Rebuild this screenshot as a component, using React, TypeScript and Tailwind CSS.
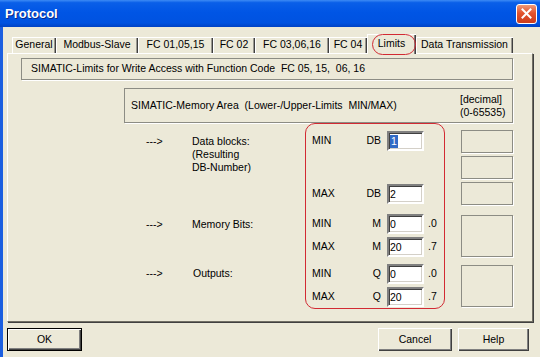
import React from "react";

const tabs = [
  { label: "General", w: "w-[44px]" },
  { label: "Modbus-Slave", w: "w-[82px]" },
  { label: "FC 01,05,15", w: "w-[75px]" },
  { label: "FC 02", w: "w-[42px]" },
  { label: "FC 03,06,16", w: "w-[74px]" },
  { label: "FC 04", w: "w-[38px]" },
  { label: "Limits", w: "w-[49px]", active: true },
  { label: "Data Transmission", w: "w-[97px]" },
];

function Field({ value, selected }: { value: string; selected?: boolean }) {
  return (
    <div className="flex h-[20px] w-[37px] items-center border-2 border-t-[#808080] border-l-[#808080] border-b-white border-r-white bg-white pl-[1px] shadow-[inset_1px_1px_0_#404040,inset_-1px_-1px_0_#d4d0c8]">
      {selected ? (
        <span className="bg-[#316ac5] px-[1px] leading-[13px] text-white">{value}</span>
      ) : (
        <span className="leading-[13px]">{value}</span>
      )}
    </div>
  );
}

function LimitRow({ kind, prefix, value, suffix, selected }: { kind: string; prefix: string; value: string; suffix?: string; selected?: boolean }) {
  return (
    <div className="flex h-[20px] items-center">
      <span className="w-[50px]">{kind}</span>
      <span className="w-[19px] text-right">{prefix}</span>
      <span className="w-[6px]" />
      <Field value={value} selected={selected} />
      <span className="w-[4px]" />
      <span className="w-[33px]">{suffix}</span>
    </div>
  );
}

function Frame({ className }: { className: string }) {
  return <div className={`w-[52px] border border-[#8c8c84] shadow-[1px_1px_0_#ffffff] ${className}`} />;
}

function Button({ label, isDefault, className }: { label: string; isDefault?: boolean; className: string }) {
  return (
    <button
      className={`flex h-[23px] items-center justify-center bg-[#ece9d8] ${className} ${
        isDefault
          ? "border border-black shadow-[inset_1px_1px_0_#ffffff,inset_-1px_-1px_0_#404040,inset_-2px_-2px_0_#808080]"
          : "shadow-[inset_1px_1px_0_#ffffff,inset_-1px_-1px_0_#404040,inset_-2px_-2px_0_#808080]"
      }`}
    >
      {label}
    </button>
  );
}

export default function App() {
  return (
    <div className="flex h-[357px] w-[540px] flex-col overflow-hidden bg-[#ece9d8] font-['Liberation_Sans',Arial,sans-serif] text-[10.5px] text-black">
      {/* title bar */}
      <div className="flex h-[27px] shrink-0 items-center justify-between bg-[linear-gradient(to_bottom,#3d8bf5_0%,#0a5fe8_10%,#0055e5_45%,#0052e0_85%,#0042c4_100%)] pl-[5px] pr-[3px]">
        <span className="text-[13px] font-bold text-white [text-shadow:1px_1px_0_#0a2a8a]">Protocol</span>
        <div className="flex h-[20px] w-[21px] items-center justify-center rounded-[3px] border border-white bg-[linear-gradient(to_bottom,#f09a78,#e2532e_45%,#cc3c1c)]">
          <svg width="11" height="11" viewBox="0 0 11 11">
            <path d="M1.5 1.5 L9.5 9.5 M9.5 1.5 L1.5 9.5" stroke="white" strokeWidth="2" strokeLinecap="square" />
          </svg>
        </div>
      </div>

      <div className="flex flex-1 flex-col border-l-[3px] border-[#1c5fe0] pl-[4px]">
        {/* tab strip */}
        <div className="flex h-[26px] items-end pl-[5px] pt-[7px]">
          {tabs.map((t) =>
            t.active ? (
              <div key={t.label} className={`relative z-10 -mb-[1px] flex h-[20px] ${t.w} items-start justify-center bg-[#ece9d8] pt-[2px] shadow-[inset_1px_1px_0_#ffffff,inset_-1px_0_0_#404040,inset_-2px_0_0_#808080]`}>
                <span>{t.label}</span>
                <span className="absolute left-[5px] top-0 h-[21px] w-[44px] rounded-full border border-[#d22a33]" />
              </div>
            ) : (
              <div key={t.label} className={`flex h-[16px] ${t.w} items-center justify-center shadow-[inset_1px_1px_0_#ffffff,inset_-1px_0_0_#404040,inset_-2px_0_0_#9a9890]`}>
                <span>{t.label}</span>
              </div>
            )
          )}
        </div>

        {/* panel */}
        <div className="relative flex h-[269px] w-[526px] flex-col border border-t-white border-l-white border-r-[#716f64] border-b-[#716f64] shadow-[1px_1px_0_#404040]">
          <div className="ml-[13px] mt-[4px] flex h-[22px] w-[492px] items-center whitespace-pre border border-[#8c8c84] pl-[9px] shadow-[1px_1px_0_#ffffff]">
            SIMATIC-Limits for Write Access with Function Code  FC 05, 15,  06, 16
          </div>

          <div className="ml-[116px] mt-[8px] flex h-[35px] w-[389px] items-center justify-between whitespace-pre border border-[#8c8c84] pl-[6px] shadow-[1px_1px_0_#ffffff]">
            <span className="pt-[1px]">SIMATIC-Memory Area  (Lower-/Upper-Limits  MIN/MAX)</span>
            <div className="flex w-[52px] flex-col leading-[13px]">
              <span>[decimal]</span>
              <span>(0-65535)</span>
            </div>
          </div>

          {/* data blocks */}
          <div className="ml-[138px] mt-[7px] flex h-[75px]">
            <span className="w-[46px] pt-[5px] leading-[13px]">---&gt;</span>
            <div className="flex w-[120px] flex-col pt-[5px] leading-[13px]">
              <span>Data blocks:</span>
              <span>(Resulting</span>
              <span>DB-Number)</span>
            </div>
            <div className="flex flex-col justify-between py-[1px]">
              <LimitRow kind="MIN" prefix="DB" value="1" selected />
              <LimitRow kind="MAX" prefix="DB" value="2" />
            </div>
            <div className="flex flex-col gap-[3px]">
              <Frame className="h-[23px]" />
              <Frame className="h-[23px]" />
              <Frame className="h-[23px]" />
            </div>
          </div>

          {/* memory bits */}
          <div className="ml-[138px] mt-[9px] flex h-[43px]">
            <span className="w-[46px] pt-[4px] leading-[13px]">---&gt;</span>
            <span className="w-[120px] pt-[4px] leading-[13px]">Memory Bits:</span>
            <div className="flex flex-col gap-[3px]">
              <LimitRow kind="MIN" prefix="M" value="0" suffix=".0" />
              <LimitRow kind="MAX" prefix="M" value="20" suffix=".7" />
            </div>
            <Frame className="mt-[1px] h-[42px]" />
          </div>

          {/* outputs */}
          <div className="ml-[138px] mt-[7px] flex h-[43px]">
            <span className="w-[46px] pt-[3px] leading-[13px]">---&gt;</span>
            <span className="w-[120px] pl-[1px] pt-[3px] leading-[13px]">Outputs:</span>
            <div className="flex flex-col gap-[3px]">
              <LimitRow kind="MIN" prefix="Q" value="0" suffix=".0" />
              <LimitRow kind="MAX" prefix="Q" value="20" suffix=".7" />
            </div>
            <Frame className="mt-[1px] h-[42px]" />
          </div>

          {/* annotation */}
          <div className="absolute left-[297px] top-[69px] h-[186px] w-[140px] rounded-[10px] border border-[#d22a33]" />
        </div>

        {/* buttons */}
        <div className="mt-[6px] flex">
          <Button label="OK" isDefault className="w-[75px]" />
          <div className="flex-1" />
          <Button label="Cancel" className="w-[74px]" />
          <Button label="Help" className="ml-[6px] mr-[11px] w-[71px]" />
        </div>
      </div>
    </div>
  );
}
